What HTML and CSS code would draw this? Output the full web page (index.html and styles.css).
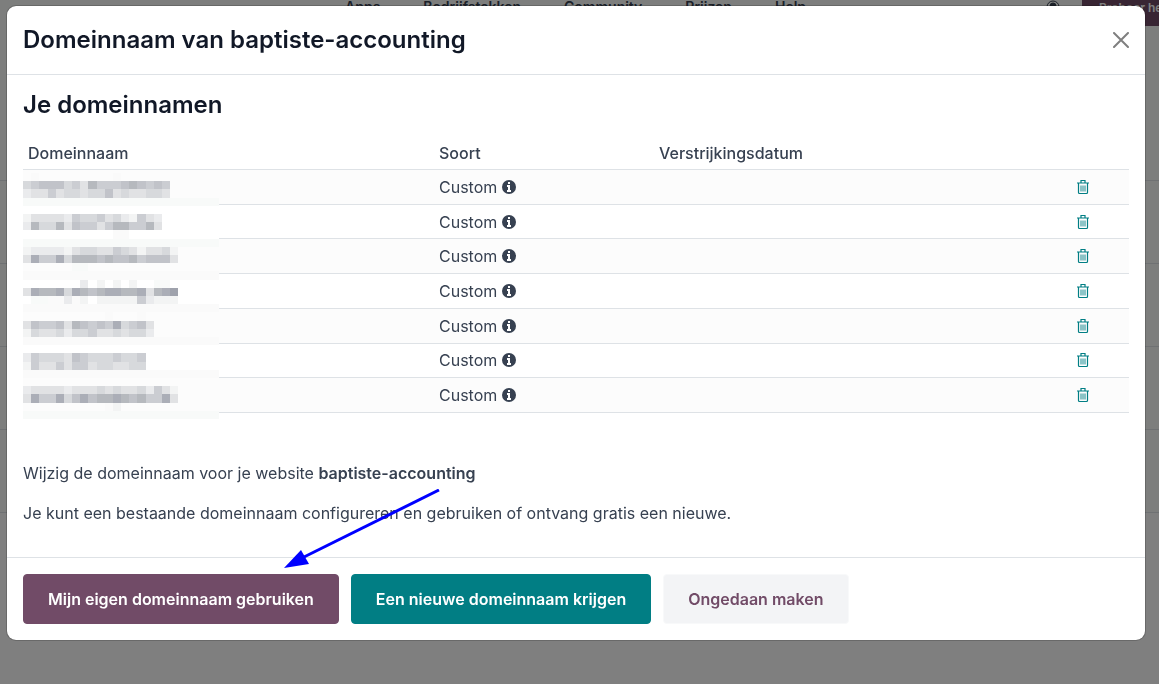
FILE: index.html
```html
<!DOCTYPE html>
<html lang="nl">
<head>
    <meta charset="utf-8">
    <meta name="viewport" content="width=device-width, initial-scale=1">
    <title>Domeinnaam van baptiste-accounting</title>
    <link rel="stylesheet" href="styles.css">
</head>
<body>
    <div class="page">
        <header class="page-header">
            <nav class="page-nav">
                <a href="#">Apps</a>
                <a href="#">Bedrijfstakken</a>
                <a href="#">Community</a>
                <a href="#">Prijzen</a>
                <a href="#">Help</a>
            </nav>
            <a href="#" class="page-user" aria-label="Account">
                <svg width="14" height="14" viewBox="0 0 14 14" fill="none" stroke="currentColor">
                    <circle cx="7" cy="7" r="6"/>
                    <circle cx="7" cy="6" r="3" fill="currentColor"/>
                    <path d="M3 11c1-3 7-3 8 0" fill="currentColor"/>
                </svg>
            </a>
            <a href="#" class="page-try">Probeer het gratis</a>
        </header>
        <div class="page-rows">
            <div></div>
            <div></div>
            <div></div>
            <div></div>
            <div></div>
        </div>
    </div>

    <div class="backdrop">
        <div class="modal" role="dialog" aria-labelledby="modal-title">
            <div class="modal-header">
                <h2 id="modal-title">Domeinnaam van baptiste-accounting</h2>
                <button type="button" class="close" aria-label="Sluiten">
                    <svg width="16" height="16" viewBox="0 0 16 16" fill="none" stroke="currentColor" stroke-width="2" stroke-linecap="round">
                        <path d="M1 1l14 14M15 1L1 15"/>
                    </svg>
                </button>
            </div>

            <div class="modal-body">
                <h2>Je domeinnamen</h2>
                <div class="domains">
                    <table class="domain-table">
                        <thead>
                            <tr>
                                <th class="col-name">Domeinnaam</th>
                                <th class="col-type">Soort</th>
                                <th class="col-date">Verstrijkingsdatum</th>
                                <th class="col-action"></th>
                            </tr>
                        </thead>
                        <tbody id="domain-rows"></tbody>
                    </table>
                    <svg class="redacted" id="redacted" viewBox="0 0 24 30" preserveAspectRatio="none" shape-rendering="crispEdges"></svg>
                </div>
                <p>Wijzig de domeinnaam voor je website <strong>baptiste-accounting</strong></p>
                <p>Je kunt een bestaande domeinnaam configureren en gebruiken of ontvang gratis een nieuwe.</p>
            </div>

            <div class="modal-footer">
                <button type="button" class="btn btn-primary">Mijn eigen domeinnaam gebruiken</button>
                <button type="button" class="btn btn-secondary">Een nieuwe domeinnaam krijgen</button>
                <button type="button" class="btn btn-light">Ongedaan maken</button>
                <svg class="arrow" width="156" height="80" viewBox="0 0 156 80">
                    <path d="M155 1L20 68" stroke="#00f" stroke-width="3"/>
                    <path d="M0 79L17 61L25 75Z" fill="#00f"/>
                </svg>
            </div>
        </div>
    </div>

    <script src="script.js"></script>
</body>
</html>
```

FILE: styles.css
```css
* {
    box-sizing: border-box;
}

body {
    margin: 0;
    font-family: Inter, "Noto Sans", sans-serif;
    font-size: 16px;
    line-height: 24px;
    color: #374151;
    background: #fff;
}

h2 {
    margin: 0;
    font-size: 24px;
    line-height: 28px;
    font-weight: 600;
    color: #111827;
}

p {
    margin: 0 0 16px;
}

strong {
    font-weight: 600;
}

/* Page behind the dialog */
.page {
    height: 100vh;
    overflow: hidden;
}

.page-header {
    display: flex;
    align-items: flex-start;
    height: 98px;
    padding-left: 345px;
    background: #fafcfb;
}

.page-header a {
    color: #374151;
    text-decoration: none;
}

.page-nav {
    display: flex;
    gap: 43px;
    margin-top: -5px;
    font-size: 14px;
    font-weight: 600;
}

.page-user {
    margin-left: auto;
    line-height: 0;
}

.page-header .page-try {
    width: 77px;
    height: 26px;
    margin-left: 22px;
    padding: 0 17px;
    overflow: hidden;
    white-space: nowrap;
    font-size: 12px;
    line-height: 16px;
    font-weight: 600;
    color: #fff;
    background: #714b67;
}

.page-rows div {
    height: 83px;
    border-bottom: 1px solid #dee2e6;
    background: #fafcfb;
}

/* Dialog */
.backdrop {
    position: fixed;
    inset: 0;
    padding: 5px 13px 0 6px;
    background: rgba(0, 0, 0, 0.5);
}

.modal {
    border: 1px solid rgba(0, 0, 0, 0.175);
    border-radius: 10px;
    background: #fff;
    background-clip: padding-box;
}

.modal-header {
    display: flex;
    align-items: center;
    justify-content: space-between;
    padding: 20px 16px;
    border-bottom: 1px solid #dee2e6;
}

.close {
    display: flex;
    padding: 0;
    border: 0;
    color: #7f7f7f;
    background: none;
    cursor: pointer;
}

.modal-body {
    padding: 16px;
}

.domains {
    position: relative;
    margin: 18px 0 48px;
}

.domain-table {
    width: 100%;
    height: 276px;
    border-collapse: separate;
    border-spacing: 0;
    table-layout: fixed;
}

.domain-table th,
.domain-table td {
    padding: 4px 5px;
    border-bottom: 1px solid #dee2e6;
    text-align: left;
    vertical-align: middle;
}

.domain-table th {
    font-weight: 500;
}

.domain-table tbody tr:nth-child(odd) {
    background: #fcfcfc;
}

.col-name {
    width: 411px;
}

.col-type {
    width: 220px;
}

.col-action {
    width: 92px;
}

.info {
    vertical-align: -1px;
}

.delete {
    display: block;
    margin: 0 auto;
    padding: 0;
    border: 0;
    line-height: 0;
    color: #017e84;
    background: none;
    cursor: pointer;
}

/* Covers the domain names */
.redacted {
    position: absolute;
    top: 36px;
    left: 0;
    width: 196px;
    height: 246px;
}

.modal-footer {
    position: relative;
    display: flex;
    flex-wrap: wrap;
    gap: 12px;
    padding: 16px;
    border-top: 1px solid #dee2e6;
}

.btn {
    padding: 12px 24px;
    border: 1px solid;
    border-radius: 4px;
    font: inherit;
    font-weight: 600;
    cursor: pointer;
}

.btn-primary {
    color: #fff;
    background: #714b67;
    border-color: #714b67;
}

.btn-secondary {
    color: #fff;
    background: #017e84;
    border-color: #017e84;
}

.btn-light {
    color: #714b67;
    background: #f3f4f6;
    border-color: #f8f9fa;
}

.arrow {
    position: absolute;
    top: -69px;
    left: 277px;
    pointer-events: none;
}
```

FILE: script.js
```js
const DOMAIN_COUNT = 7;

const infoIcon = `
    <svg class="info" width="14" height="14" viewBox="0 0 14 14" role="img" aria-label="Info">
        <circle cx="7" cy="7" r="7" fill="#374151"/>
        <path d="M6 2h2v2H6zM5 5h3v5h1v2H5v-2h1V7H5z" fill="#fff"/>
    </svg>`;

const trashIcon = `
    <svg width="14" height="16" viewBox="0 0 14 16" fill="none" stroke="currentColor">
        <path d="M1 4h12M5 3.5v-2h4v2" stroke-width="1.2"/>
        <path d="M2.5 4v9.5q0 1 1 1h7q1 0 1-1V4" stroke-width="1.2"/>
        <path d="M5 6.5v6M7 6.5v6M9 6.5v6" stroke-width="0.9"/>
    </svg>`;

document.getElementById('domain-rows').innerHTML = `
    <tr>
        <td></td>
        <td>Custom ${infoIcon}</td>
        <td></td>
        <td><button type="button" class="delete" aria-label="Verwijderen">${trashIcon}</button></td>
    </tr>`.repeat(DOMAIN_COUNT);

// Mosaic over the names: first char fills the row, the rest are its cells
const shades = {
    w: '#ffffff', s: '#fcfcfc', b: '#f8faf9', n: '#fafafa',
    1: '#f3f4f4', 2: '#eaebed', 3: '#e1e2e4', 4: '#d7d9dc', 5: '#cbcdd2',
    6: '#c1c3c9', 7: '#b6b9be', 8: '#abaeb7', 9: '#9fa2ac'
};

const mosaic = [
    'ssnsssssssssn',
    's456664537555676565',
    's233534434463433443',
    'b',
    'w',
    'w13333254453421532',
    'w27447365535775573',
    'wwwwwwwwwwwwnn',
    'b',
    's1222213443354313341',
    's3855847776766756663',
    'sssssssbb',
    'n',
    'wwwwwwww2w1w1w1wwbb',
    'w3877848767887783789',
    'wwbbnn2n1w1111152111',
    'n',
    'sssssssssssnsssn',
    's3655637656584563',
    's1433424453343442',
    'n',
    'w',
    'w254443654445445',
    'w153353553443344',
    'n',
    's',
    's2333323334343342531',
    's3855846867787675583',
    'sssssssssssn1',
    'b'
];

const redacted = document.getElementById('redacted');
mosaic.forEach((row, y) => {
    let rects = `<rect x="0" y="${y}" width="24" height="1" fill="${shades[row[0]]}"/>`;
    [...row.slice(1)].forEach((cell, x) => {
        rects += `<rect x="${x}" y="${y}" width="1" height="1" fill="${shades[cell]}"/>`;
    });
    redacted.innerHTML += rects;
});
```
